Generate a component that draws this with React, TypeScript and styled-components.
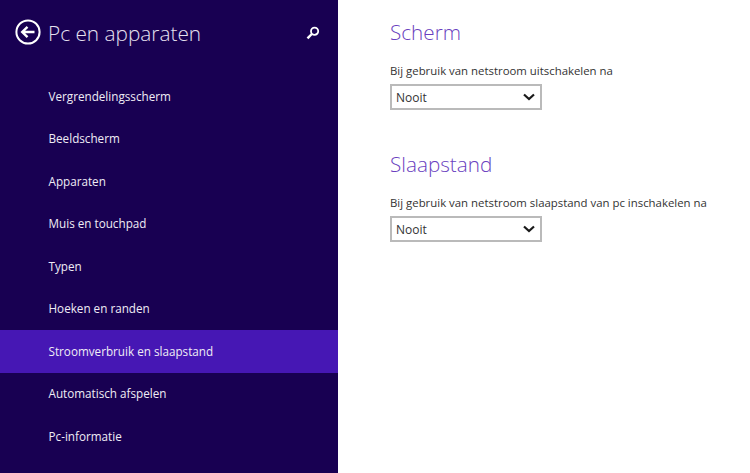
import { createGlobalStyle } from 'styled-components';
import styled from 'styled-components';

const GlobalStyle = createGlobalStyle`
  html, body {
    margin: 0;
    padding: 0;
    background: #ffffff;
  }
  body {
    font-family: "Open Sans", "Noto Sans", sans-serif;
  }
`;

const Page = styled.div`
  display: flex;
  width: 750px;
  height: 473px;
  overflow: hidden;
`;

const Sidebar = styled.nav`
  width: 338px;
  flex-shrink: 0;
  background: #180052;
  display: flex;
  flex-direction: column;
`;

const SidebarHeader = styled.div`
  height: 75px;
  display: flex;
  align-items: flex-start;
  padding: 19px 18px 0 15px;
  box-sizing: border-box;
`;

const BackIcon = styled.svg`
  width: 26px;
  height: 26px;
  flex-shrink: 0;
`;

const SidebarTitle = styled.h1`
  margin: 0 0 0 7px;
  flex: 1;
  color: #e6e1f0;
  font-size: 20.8px;
  font-weight: 300;
  line-height: 28px;
`;

const SearchIcon = styled.svg`
  width: 14px;
  height: 14px;
  margin-top: 7px;
`;

const MenuList = styled.ul`
  list-style: none;
  margin: 0;
  padding: 0;
`;

const MenuItem = styled.li<{ $active?: boolean }>`
  height: 42.5px;
  box-sizing: border-box;
  display: flex;
  align-items: center;
  padding: 0 0 1px 48.5px;
  color: #efecf5;
  font-size: 11.7px;
  background: ${(props) => (props.$active ? '#4617b4' : 'transparent')};
`;

const Content = styled.main`
  flex: 1;
  padding: 18px 0 0 52px;
`;

const Section = styled.section`
  height: 132px;
`;

const SectionTitle = styled.h2`
  margin: 0;
  color: #6a3fc0;
  font-size: 20.7px;
  font-weight: 300;
  line-height: 28px;
`;

const FieldLabel = styled.div`
  margin-top: 17px;
  color: #333333;
  font-size: 11.4px;
  line-height: 16px;
`;

const Select = styled.div`
  margin-top: 5px;
  width: 152px;
  height: 26px;
  box-sizing: border-box;
  border: 2px solid #bababa;
  display: flex;
  align-items: center;
  justify-content: space-between;
  padding: 0 5px 0 4px;
  color: #333333;
  font-size: 12px;
`;

const Chevron = styled.svg`
  width: 12px;
  height: 8px;
`;

const menuItems = [
  'Vergrendelingsscherm',
  'Beeldscherm',
  'Apparaten',
  'Muis en touchpad',
  'Typen',
  'Hoeken en randen',
  'Stroomverbruik en slaapstand',
  'Automatisch afspelen',
  'Pc-informatie',
];

const sections = [
  { title: 'Scherm', label: 'Bij gebruik van netstroom uitschakelen na' },
  { title: 'Slaapstand', label: 'Bij gebruik van netstroom slaapstand van pc inschakelen na' },
];

const App = () => {
  return (
    <Page>
      <GlobalStyle />
      <Sidebar>
        <SidebarHeader>
          <BackIcon viewBox="0 0 26 26" fill="none" stroke="#ffffff">
            <circle cx="13" cy="13" r="11.6" strokeWidth="2" />
            <path d="M19.5 13H7.5M12.5 7.8L7.2 13l5.3 5.2" strokeWidth="2.4" />
          </BackIcon>
          <SidebarTitle>Pc en apparaten</SidebarTitle>
          <SearchIcon viewBox="0 0 14 14" fill="none" stroke="#ffffff">
            <circle cx="8.6" cy="5.2" r="3.6" strokeWidth="1.8" />
            <path d="M5.8 8L1.5 12.4" strokeWidth="2.4" />
          </SearchIcon>
        </SidebarHeader>
        <MenuList>
          {menuItems.map((item) => (
            <MenuItem key={item} $active={item === 'Stroomverbruik en slaapstand'}>
              {item}
            </MenuItem>
          ))}
        </MenuList>
      </Sidebar>
      <Content>
        {sections.map((section) => (
          <Section key={section.title}>
            <SectionTitle>{section.title}</SectionTitle>
            <FieldLabel>{section.label}</FieldLabel>
            <Select>
              Nooit
              <Chevron viewBox="0 0 12 8" fill="none" stroke="#1a1a1a">
                <path d="M1 1.5l5 4.6 5-4.6" strokeWidth="2.2" />
              </Chevron>
            </Select>
          </Section>
        ))}
      </Content>
    </Page>
  );
};

export default App;
